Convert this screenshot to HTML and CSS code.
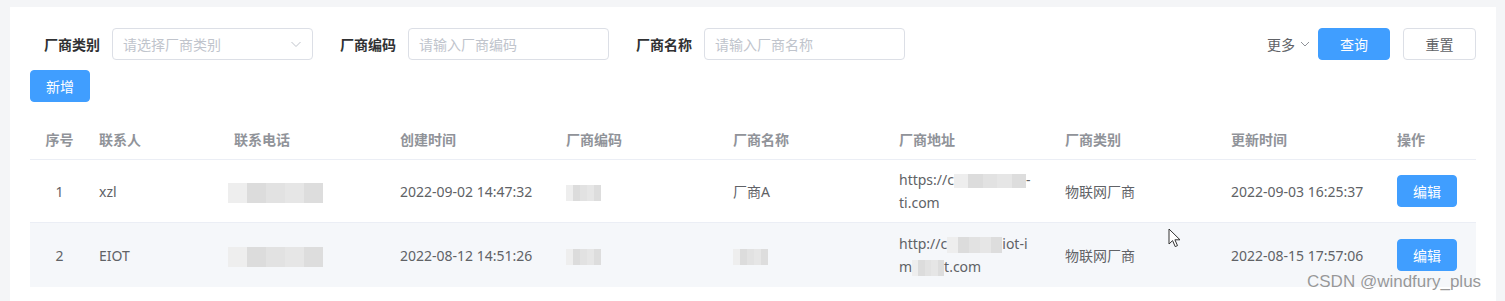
FILE: index.html
```html
<!DOCTYPE html>
<html>
<head>
  <meta charset="UTF-8">
  <title>厂商管理</title>
  <link rel="stylesheet" href="styles.css">
</head>
<body>
  <div class="card">
    <form class="search">
      <div class="item">
        <label>厂商类别</label>
        <div class="input select"><span class="ph">请选择厂商类别</span>
          <svg class="arrow" width="12" height="12" viewBox="0 0 12 12"><path d="M1.5 4l4.5 4.5L10.5 4" fill="none" stroke="#c0c4cc" stroke-width="1"/></svg>
        </div>
      </div>
      <div class="item">
        <label>厂商编码</label>
        <div class="input"><span class="ph">请输入厂商编码</span></div>
      </div>
      <div class="item">
        <label>厂商名称</label>
        <div class="input"><span class="ph">请输入厂商名称</span></div>
      </div>
      <div class="actions">
        <span class="more">更多
          <svg width="10" height="10" viewBox="0 0 10 10"><path d="M1 3l4 4 4-4" fill="none" stroke="#909399" stroke-width="1"/></svg>
        </span>
        <button type="button" class="btn primary wide">查询</button>
        <button type="button" class="btn plain wide">重置</button>
      </div>
    </form>
    <div class="toolbar">
      <button type="button" class="btn primary">新增</button>
    </div>

    <table class="grid">
      <colgroup>
        <col style="width:59px"><col style="width:135px"><col style="width:166px"><col style="width:166px"><col style="width:167px">
        <col style="width:166px"><col style="width:166px"><col style="width:166px"><col style="width:166px"><col style="width:89px">
      </colgroup>
      <thead>
        <tr>
          <th class="center">序号</th><th>联系人</th><th>联系电话</th><th>创建时间</th><th>厂商编码</th>
          <th>厂商名称</th><th>厂商地址</th><th>厂商类别</th><th>更新时间</th><th>操作</th>
        </tr>
      </thead>
      <tbody>
        <tr>
          <td class="center">1</td>
          <td>xzl</td>
          <td><span class="blur phone"></span></td>
          <td>2022-09-02 14:47:32</td>
          <td><span class="blur code"></span></td>
          <td>厂商A</td>
          <td>https://c<span class="blur url1"></span>-<br>ti.com</td>
          <td>物联网厂商</td>
          <td>2022-09-03 16:25:37</td>
          <td><button type="button" class="btn primary">编辑</button></td>
        </tr>
        <tr class="hover">
          <td class="center">2</td>
          <td>EIOT</td>
          <td><span class="blur phone"></span></td>
          <td>2022-08-12 14:51:26</td>
          <td><span class="blur code"></span></td>
          <td><span class="blur code"></span></td>
          <td>http://c<span class="blur url2"></span>iot-i<br>m<span class="blur url3"></span>t.com</td>
          <td>物联网厂商</td>
          <td>2022-08-15 17:57:06</td>
          <td><button type="button" class="btn primary">编辑</button></td>
        </tr>
      </tbody>
    </table>
  </div>

  <svg class="cursor" width="14" height="20" viewBox="0 0 14 20"><path d="M1 1v15l3.6-3.4 2.6 6 2.3-1-2.6-5.8H12z" fill="#fff" stroke="#333" stroke-width="1" stroke-linejoin="round"/></svg>
  <div class="mark">CSDN @windfury_plus</div>
</body>
</html>
```

FILE: styles.css
```css
body { margin: 0; background: #f4f5f7; font-family: "Noto Sans", "Noto Sans CJK SC", sans-serif; font-size: 14px; color: #606266; }
.card { background: #fff; margin: 7px 9px 0 10px; padding: 21px 20px 14px; min-height: 260px; }

.search { display: flex; align-items: center; }
.item { display: flex; align-items: center; margin-right: 13px; }
.item label { width: 82px; padding-right: 12px; box-sizing: border-box; text-align: right; font-weight: 600; color: #303133; }
.input { width: 201px; height: 32px; box-sizing: border-box; border: 1px solid #dcdfe6; border-radius: 4px; padding: 0 15px 0 10px; display: flex; align-items: center; justify-content: space-between; }
.ph { color: #c0c4cc; }
.arrow { margin-right: -5px; }
.actions { margin-left: auto; display: flex; align-items: center; gap: 13px; }
.more { color: #606266; display: flex; align-items: center; gap: 5px; margin-right: -5px; }

.btn { height: 32px; min-width: 60px; padding: 0 15px; border-radius: 4px; font: inherit; font-size: 14px; cursor: pointer; }
.btn.wide { width: 72px; }
.btn.plain { width: 73px; }
.primary { background: #409eff; border: 1px solid #409eff; color: #fff; }
.plain { background: #fff; border: 1px solid #dcdfe6; color: #606266; }

.toolbar { margin-top: 10px; margin-bottom: 18px; }

.grid { width: 1446px; border-collapse: collapse; table-layout: fixed; }
.grid th, .grid td { padding: 8px 10px; line-height: 23px; text-align: left; border-bottom: 1px solid #ebeef5; vertical-align: middle; }
.grid th { color: #909399; font-weight: 700; }
.grid .center { text-align: center; }
.grid tr.hover td { background: #f5f7fa; padding-top: 9px; padding-bottom: 8px; border-bottom-color: #f5f7fa; }
.grid td .btn { padding: 0; width: 60px; }

.blur { display: inline-block; vertical-align: middle; height: 20px;
  background: linear-gradient(90deg, #eee 0 20%, #dcdcdc 20% 40%, #e2e2e2 40% 60%, #e6e6e6 60% 80%, #ddd 80% 100%); }
.phone { width: 95px; margin-left: -6px; }
.code { width: 35px; height: 16px; }
.url1 { width: 72px; height: 14px; }
.url2 { width: 55px; height: 16px; }
.url3 { width: 32px; height: 16px; }

.cursor { position: absolute; left: 1168px; top: 228px; }
.mark { position: absolute; left: 1307px; top: 272px; font-size: 17px; color: rgba(120, 120, 120, 0.75); font-family: "Liberation Sans", sans-serif; }
```
